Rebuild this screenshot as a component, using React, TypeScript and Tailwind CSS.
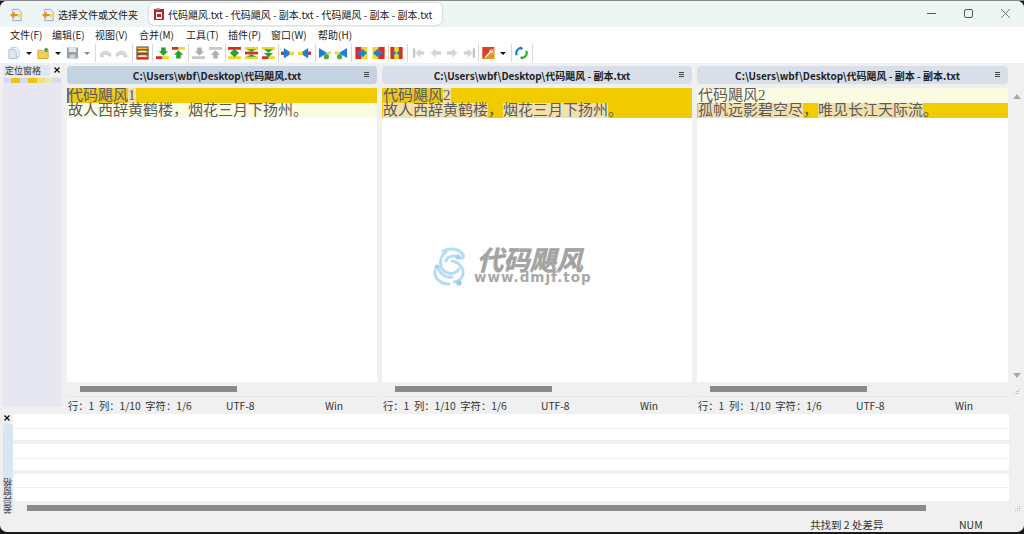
import React from "react";

const CJK = "font-['Noto_Sans_CJK_SC','Noto_Sans',sans-serif]";

function Arrow({ up, fill, x = 8 }: { up?: boolean; fill: string; x?: number }) {
  return up ? (
    <polygon points={`${x},1 ${x + 5},6 ${x + 2.5},6 ${x + 2.5},10 ${x - 2.5},10 ${x - 2.5},6 ${x - 5},6`} fill={fill} />
  ) : (
    <polygon points={`${x},11 ${x + 5},6 ${x + 2.5},6 ${x + 2.5},2 ${x - 2.5},2 ${x - 2.5},6 ${x - 5},6`} fill={fill} />
  );
}

type Kind =
  | "new" | "open" | "save" | "undo" | "redo" | "refresh" | "down" | "up" | "downG" | "upG"
  | "x1" | "x2" | "x3" | "right" | "left" | "rightG" | "leftG" | "fr" | "fl" | "fb"
  | "gl1" | "gl2" | "gr1" | "gr2" | "opt" | "sync";

function Icon({ k }: { k: Kind }) {
  const s = { width: 13, height: 14, viewBox: "0 0 14 14" };
  switch (k) {
    case "new":
      return <svg {...s}><path d="M1 3h6l3 3v7H1z" fill="#dbe6f3" stroke="#a9bdd6" /><path d="M4 1h5l3 3v7H9V6L7 3H4z" fill="#eef3fa" stroke="#b6c8de" /></svg>;
    case "open":
      return <svg {...s}><path d="M1 4h4l1 1h6v8H1z" fill="#f2cf52" stroke="#c9a43a" /><path d="M7 4l3-3 3 3h-2v2H9V4z" fill="#35a035" /></svg>;
    case "save":
      return <svg {...s}><path d="M1 1h12v12H1z" fill="#98a1aa" /><path d="M3 1h8v5H3z" fill="#e4e6e8" /><path d="M4 9h6v4H4z" fill="#d0d4d8" /></svg>;
    case "undo":
      return <svg {...s}><path d="M1 11c0-6 7-8 12-3l-1 3c-3-3-6-3-8-1l1 1z" fill="#d8d8d8" stroke="#c0c0c0" strokeWidth=".6" /></svg>;
    case "redo":
      return <svg {...s}><path d="M13 11c0-6-7-8-12-3l1 3c3-3 6-3 8-1l-1 1z" fill="#d8d8d8" stroke="#c0c0c0" strokeWidth=".6" /></svg>;
    case "refresh":
      return <svg {...s}><rect x="1" y="0.500" width="12" height="13" fill="#f0c020" stroke="#444" /><rect x="1" y="3" width="12" height="1.500" fill="#444" /><rect x="3" y="4.500" width="8" height="2" fill="#e8e8e8" /><rect x="1" y="6.500" width="12" height="2" fill="#e02020" /><rect x="1" y="8.500" width="12" height="1" fill="#444" /><rect x="3" y="9.500" width="8" height="2" fill="#e8e8e8" /><rect x="1" y="11.500" width="12" height="2" fill="#e02020" /></svg>;
    case "down":
      return <svg {...s}><rect x="0" y="10.500" width="7" height="3" fill="#e02828" /><rect x="7" y="10.500" width="7" height="3" fill="#f0d820" /><g transform="translate(0 -1)"><Arrow fill="#2ca02c" /></g></svg>;
    case "up":
      return <svg {...s}><rect x="0" y="0.500" width="7" height="3" fill="#e02828" /><rect x="7" y="0.500" width="7" height="3" fill="#f0d820" /><g transform="translate(-1 3)"><Arrow up fill="#2ca02c" /></g></svg>;
    case "downG":
      return <svg {...s}><rect x="0" y="10.500" width="14" height="3" fill="#c8c8c8" /><g transform="translate(0 -1)"><Arrow fill="#b0b0b0" /></g></svg>;
    case "upG":
      return <svg {...s}><rect x="0" y="0.500" width="14" height="3" fill="#c8c8c8" /><g transform="translate(-1 3)"><Arrow up fill="#b0b0b0" /></g></svg>;
    case "x1":
      return <svg {...s}><rect x="0" y="0.500" width="14" height="3" fill="#e02828" /><rect x="0" y="10.500" width="14" height="3" fill="#f0d820" /><path d="M7 2.500l5 4.500H2z M2 7h10l-5 4.500z" fill="#2ca02c" /></svg>;
    case "x2":
      return <svg {...s}><rect x="0" y="0.500" width="14" height="3" fill="#f0d820" /><rect x="0" y="5.500" width="14" height="3" fill="#e02828" /><rect x="0" y="10.500" width="14" height="3" fill="#f0d820" /><path d="M2 3h10L7 6z M7 8l5 3H2z" fill="#2ca02c" /></svg>;
    case "x3":
      return <svg {...s}><rect x="0" y="0.500" width="14" height="3" fill="#f0d820" /><rect x="0" y="10.500" width="7" height="3" fill="#e02828" /><rect x="7" y="10.500" width="7" height="3" fill="#f0d820" /><path d="M2 3h10L7 7z M2 7h10l-5 4.500z" fill="#2ca02c" /></svg>;
    case "right":
      return <svg {...s}><rect x="0" y="5.500" width="6" height="3.500" fill="#e02828" /><path d="M3 1.500l9 5.700L3 13z" fill="#1f7fd8" /><rect x="9" y="5.500" width="5" height="3.500" fill="#f0d820" /></svg>;
    case "left":
      return <svg {...s}><rect x="8" y="5.500" width="6" height="3.500" fill="#e02828" /><path d="M11 1.500L2 7.200 11 13z" fill="#1f7fd8" /><rect x="0" y="5.500" width="5" height="3.500" fill="#f0d820" /></svg>;
    case "rightG":
      return <svg {...s}><path d="M1 1.500l9 5.500L1 12.500z" fill="#1f7fd8" /><rect x="10" y="5.500" width="4" height="3" fill="#f0d820" /><circle cx="9" cy="11" r="2.800" fill="#46a846" /></svg>;
    case "leftG":
      return <svg {...s}><path d="M13 1.500L4 7l9 5.500z" fill="#1f7fd8" /><rect x="0" y="5.500" width="4" height="3" fill="#f0d820" /><circle cx="5" cy="11" r="2.800" fill="#46a846" /></svg>;
    case "fr":
      return <svg {...s}><rect x="0.500" y="0.500" width="13" height="13" fill="#f0d820" /><rect x="0.500" y="0.500" width="6" height="13" fill="#e02828" /><path d="M3 5h4V2l6 5-6 5V9H3z" fill="#1f7fd8" /></svg>;
    case "fl":
      return <svg {...s}><rect x="0.500" y="0.500" width="13" height="13" fill="#f0d820" /><rect x="7" y="0.500" width="6.500" height="13" fill="#e02828" /><path d="M11 5H7V2L1 7l6 5V9h4z" fill="#1f7fd8" /></svg>;
    case "fb":
      return <svg {...s}><rect x="0.500" y="0.500" width="13" height="13" fill="#f0d820" /><rect x="0.500" y="0.500" width="4" height="13" fill="#e02828" /><rect x="9.500" y="0.500" width="4" height="13" fill="#e02828" /><path d="M7 7L3 3.500v7z M7 7l4-3.500v7z" fill="#1f7fd8" /></svg>;
    case "gl1":
      return <svg {...s}><rect x="1" y="2" width="2.500" height="10" fill="#c4c4c4" /><path d="M4 7l5-5v3h4v4H9v3z" fill="#d4d4d4" /></svg>;
    case "gl2":
      return <svg {...s}><path d="M2 7l5-5v3h6v4H7v3z" fill="#d4d4d4" /></svg>;
    case "gr1":
      return <svg {...s}><path d="M12 7L7 2v3H1v4h6v3z" fill="#d4d4d4" /></svg>;
    case "gr2":
      return <svg {...s}><rect x="10.500" y="2" width="2.500" height="10" fill="#c4c4c4" /><path d="M10 7L5 2v3H1v4h4v3z" fill="#d4d4d4" /></svg>;
    case "opt":
      return <svg {...s}><rect x="0.500" y="0.500" width="13" height="13" fill="#e8961e" /><path d="M0.500 0.500h13L.5 13.500z" fill="#d8402c" /><path d="M3 11l5-5c-.5-2 1-3.500 3-3l-1.500 1.500 1 1L12 4c.5 2-1 3.500-3 3l-5 5z" fill="#f4f4f4" /></svg>;
    case "sync":
      return <svg {...s}><path d="M7 1.500A5.500 5.500 0 0 0 2 9.500" fill="none" stroke="#1f7fd8" strokeWidth="2.400" /><path d="M7 12.500a5.500 5.500 0 0 0 5-8" fill="none" stroke="#3aa83a" strokeWidth="2.400" /><path d="M6 0v4l3-2z" fill="#1f7fd8" /><path d="M8 14v-4l-3 2z" fill="#3aa83a" /></svg>;
  }
}

const Sep = ({ ml, mr }: { ml: string; mr: string }) => <div className={`w-px h-[18px] bg-[#d8d8d8] ${ml} ${mr}`} />;
const Drop = ({ grey }: { grey?: boolean }) => (
  <div className={`ml-[5px] w-0 h-0 border-x-[3px] border-x-transparent border-t-[3px] ${grey ? "border-t-[#8a8a8a]" : "border-t-[#111]"}`} />
);

function Group({ items, gap = "gap-[4px]" }: { items: Kind[]; gap?: string }) {
  return (
    <div className={`flex items-center ${gap}`}>
      {items.map((k, i) => (
        <Icon key={i} k={k} />
      ))}
    </div>
  );
}

function AppIcon() {
  return (
    <svg width="15" height="16" viewBox="0 0 16 16">
      <path d="M4 2h6l3 3v9H4z" fill="#e8f0f8" stroke="#8fa9c8" />
      <path d="M1 8l5-3.500V7h4v2H6v2.500z" fill="#ef8a1e" />
      <rect x="9" y="7" width="5" height="3" fill="#f4d45a" />
    </svg>
  );
}

const CloseX = () => (
  <svg width="6" height="6" viewBox="0 0 6 6"><path d="M0.500 0.500l5 5M5.500 0.500l-5 5" stroke="#111" strokeWidth="1.300" /></svg>
);

const Grip = () => (
  <svg width="7" height="7" viewBox="0 0 7 7" fill="#b4b4b4">
    <rect x="5" y="1" width="1" height="1" /><rect x="3" y="3" width="1" height="1" /><rect x="5" y="3" width="1" height="1" />
    <rect x="1" y="5" width="1" height="1" /><rect x="3" y="5" width="1" height="1" /><rect x="5" y="5" width="1" height="1" />
  </svg>
);

const S = "bg-[#f2e0ae]";
const D = "bg-[#ebc81e]";
const Y = "bg-[#f0cb00]";
const P = "bg-[#fbfbe2]";

type Seg = [string, string?];

function Row({ segs, base }: { segs: Seg[]; base: string }) {
  return (
    <div className={`h-[15px] leading-[15px] text-[15px] pl-[1px] font-['Liberation_Serif','Noto_Sans_CJK_SC',serif] text-[#5a5a5a] whitespace-nowrap flex ${base}`}>
      {segs.map(([t, c], i) => (
        <span key={i} className={c}>
          {t}
        </span>
      ))}
    </div>
  );
}

function Pane({ title, active, width, rows, hasCursor }: { title: string; active?: boolean; width: string; rows: React.ReactNode; hasCursor?: boolean }) {
  return (
    <div className={`flex flex-col shrink-0 ${width}`}>
      <div className={`h-[18px] mt-[3px] rounded-[4px] relative flex items-center justify-center pr-[10px] text-[10px] font-bold text-[#222] ${active ? "bg-[#c4d2e2]" : "bg-[#d8dfe9]"} ${CJK}`}>
        {title}
        <span className="absolute right-[8px] top-[6px] w-[5px] h-[5px] border-y border-[#444] after:block after:h-px after:mt-[1px] after:bg-[#444]" />
      </div>
      <div className="mt-[4px] h-[294px] bg-white overflow-hidden relative">
        {hasCursor && <div className="absolute left-0 top-0 w-[2px] h-[15px] bg-[#5a6fb0]" />}
        {rows}
      </div>
      <div className="h-[15px] flex items-center pl-[13px] border-b border-[#e6e6e6]">
        <div className="w-[157px] h-[6px] bg-[#8a8a8a]" />
      </div>
      <div className={`h-[17px] flex items-center pl-[1px] text-[10.3px] text-[#333] ${CJK} whitespace-nowrap`}>
        <span className="w-[158px]">行：1&nbsp;&nbsp;列：1/10&nbsp;&nbsp;字符：1/6</span>
        <span className="w-[99px]">UTF-8</span>
        <span>Win</span>
      </div>
    </div>
  );
}

function DiffBlock({ h = "h-[26px]", top = "h-[15px]" }: { h?: string; top?: string }) {
  return (
    <div className={`${h} bg-white flex flex-col`}>
      <div className={`${top} border-b border-[#f0f0f0]`} />
    </div>
  );
}

export default function App() {
  return (
    <div className="w-[1024px] h-[534px] bg-[#1a1a1a] overflow-hidden flex flex-col">
      <div className="h-px bg-[#8a8a8a] shrink-0" />
      <div className={`w-[1024px] h-[531px] rounded-b-[7px] rounded-t-[7px] bg-[#f0f0f0] flex flex-col overflow-hidden ${CJK}`}>
        {/* title bar */}
        <div className="h-[26px] bg-[#eef6f5] flex items-end shrink-0 relative">
          <div className="ml-[9px] mb-[4px] flex"><AppIcon /></div>
          <div className="ml-[17px] mb-[4px] flex"><AppIcon /></div>
          <span className="ml-[2px] mb-[5px] text-[10px] text-[#222] leading-[15px] whitespace-nowrap">选择文件或文件夹</span>
          <div className="ml-[11px] mb-[2px] h-[22px] w-[293px] bg-white rounded-[5px] shadow-[0_0_2px_rgba(0,0,0,0.3)] flex items-center pl-[3px]">
            <svg width="14" height="14" viewBox="0 0 14 14">
              <path d="M2 2h10v11H2z" fill="#c0202c" />
              <rect x="4" y="5" width="6" height="7" fill="#fff" />
              <rect x="5" y="7" width="4" height="3" fill="#c0202c" />
              <rect x="4" y="1" width="4" height="2" fill="#a0a0a0" />
            </svg>
            <span className="ml-[2px] text-[10px] text-[#222] whitespace-nowrap">代码飓风.txt - 代码飓风 - 副本.txt - 代码飓风 - 副本 - 副本.txt</span>
          </div>
          <div className="absolute right-[13px] top-[7px] flex items-center gap-[26px]">
            <svg width="11" height="11" viewBox="0 0 11 11"><path d="M1 5.500h9" stroke="#555" strokeWidth="1" /></svg>
            <svg width="11" height="11" viewBox="0 0 11 11"><rect x="1.500" y="1.500" width="8" height="8" rx="1.500" fill="none" stroke="#555" strokeWidth="1" /></svg>
            <svg width="11" height="11" viewBox="0 0 11 11"><path d="M1 1l9 9M10 1l-9 9" stroke="#777" strokeWidth="1" /></svg>
          </div>
        </div>
        {/* menu */}
        <div className="h-[16px] bg-white flex items-center shrink-0 pl-[10px] pb-[1px] text-[10px] text-[#222]">
          <span className="w-[42px]">文件(F)</span>
          <span className="w-[43px]">编辑(E)</span>
          <span className="w-[44px]">视图(V)</span>
          <span className="w-[47px]">合并(M)</span>
          <span className="w-[42px]">工具(T)</span>
          <span className="w-[43px]">插件(P)</span>
          <span className="w-[47px]">窗口(W)</span>
          <span>帮助(H)</span>
        </div>
        {/* toolbar */}
        <div className="h-[20px] bg-white flex items-center shrink-0 pl-[8px]">
          <Icon k="new" />
          <Drop />
          <div className="w-[5px]" />
          <Icon k="open" />
          <Drop />
          <div className="w-[5px]" />
          <Icon k="save" />
          <Drop grey />
          <Sep ml="ml-[5px]" mr="mr-[3px]" />
          <Group items={["undo", "redo"]} gap="gap-[3px]" />
          <Sep ml="ml-[4px]" mr="mr-[3px]" />
          <Icon k="refresh" />
          <Sep ml="ml-[3px]" mr="mr-[3px]" />
          <Group items={["down", "up"]} gap="gap-[3px]" />
          <Sep ml="ml-[3px]" mr="mr-[3px]" />
          <Group items={["downG", "upG"]} />
          <Sep ml="ml-[3px]" mr="mr-[2px]" />
          <Group items={["x1", "x2", "x3"]} />
          <Sep ml="ml-[3px]" mr="mr-[2px]" />
          <Group items={["right", "left"]} />
          <Sep ml="ml-[4px]" mr="mr-[2px]" />
          <Group items={["rightG", "leftG"]} />
          <Sep ml="ml-[3px]" mr="mr-[3px]" />
          <Group items={["fr", "fl"]} />
          <Sep ml="ml-[3px]" mr="mr-[1px]" />
          <Icon k="fb" />
          <Sep ml="ml-[4px]" mr="mr-[4px]" />
          <Group items={["gl1", "gl2", "gr1", "gr2"]} />
          <Sep ml="ml-[2px]" mr="mr-[3px]" />
          <Icon k="opt" />
          <Drop />
          <Sep ml="ml-[5px]" mr="mr-[3px]" />
          <Icon k="sync" />
          <Sep ml="ml-[4px]" mr="mr-0" />
        </div>
        {/* main */}
        <div className="h-[351px] flex shrink-0 relative">
          <div className="w-[59px] ml-[3px] mr-[5px] flex flex-col shrink-0">
            <div className="h-[13px] mt-[1px] flex items-center relative shrink-0">
              <span className="w-[47px] h-[11px] bg-[#dde6f2] text-[9px] leading-[11px] pl-[2px] text-[#333] rounded-[2px] whitespace-nowrap">定位窗格</span>
              <span className="absolute left-[51px] top-[3px] flex"><CloseX /></span>
            </div>
            <div className="bg-[#e7e7f2] h-[330px] pt-[1px]">
              <div className="h-[5px] flex bg-[#d8d8ee] mx-[1px]">
                <div className="w-[7px]" />
                <div className="w-[9px] bg-[#e8c518]" />
                <div className="w-[8px]" />
                <div className="w-[9px] bg-[#e8c518]" />
                <div className="w-[8px] bg-[#efe27a]" />
                <div className="w-[8px] bg-[#ece7b8]" />
              </div>
            </div>
          </div>
          <div className="flex flex-1 min-w-0">
            <Pane
              width="w-[310px]"
              active
              hasCursor
              title="C:\Users\wbf\Desktop\代码飓风.txt"
              rows={
                <>
                  <Row base={Y} segs={[["代码飓风", D], ["1", S]]} />
                  <Row base={P} segs={[["故人西辞黄鹤楼，烟花三月下扬州。"]]} />
                </>
              }
            />
            <div className="w-[5px] shrink-0" />
            <Pane
              width="w-[310px]"
              title="C:\Users\wbf\Desktop\代码飓风 - 副本.txt"
              rows={
                <>
                  <Row base={Y} segs={[["代码飓风", D], ["2", S]]} />
                  <Row base={Y} segs={[["故人西辞黄鹤楼", S], ["，"], ["烟花三月下扬州", S], ["。"]]} />
                </>
              }
            />
            <div className="w-[5px] shrink-0" />
            <Pane
              width="w-[311px]"
              title="C:\Users\wbf\Desktop\代码飓风 - 副本 - 副本.txt"
              rows={
                <>
                  <Row base={P} segs={[["代码飓风2"]]} />
                  <Row base={Y} segs={[["孤帆远影碧空尽", S], ["，"], ["唯见长江天际流", S], ["。"]]} />
                </>
              }
            />
            <div className="w-[16px] shrink-0 flex flex-col items-center pl-[1px]">
              <div className="mt-[31px] w-0 h-0 border-x-[4px] border-x-transparent border-b-[5px] border-b-[#a8a8a8]" />
              <div className="mt-[274px] w-0 h-0 border-x-[4px] border-x-transparent border-t-[5px] border-t-[#a8a8a8]" />
              <div className="mt-[10px] flex"><Grip /></div>
            </div>
          </div>
          {/* watermark */}
          <div className="absolute left-[432px] top-[184px] flex items-center">
            <svg width="41" height="40" viewBox="0 0 41 40">
              <g fill="none" stroke="#b4dcf4" strokeWidth="3" strokeLinecap="round">
                <path d="M11 4c8-4 17-2 20 4 1 2-1 4-3 3-5-3-12-3-14 3" />
                <path d="M14 5c-7 5-7 14-2 19 5 4 12 3 15-2" />
                <path d="M20 14c6 1 12 6 11 13-1 5-5 8-9 8" />
                <path d="M3 24c-1 8 6 13 14 13" />
                <path d="M7 23c2 5 8 8 13 7" />
              </g>
              <circle cx="26" cy="10" r="2.600" fill="#a6d3ef" />
              <circle cx="5" cy="20" r="2.600" fill="#a6d3ef" />
              <circle cx="27" cy="36" r="2.600" fill="#9cc8e6" />
            </svg>
            <div className="ml-[1px] -mt-[3px] flex flex-col items-center">
              <span className="text-[26.5px] leading-[22px] h-[22px] pr-[6px] font-bold italic text-[#a3a3a3] whitespace-nowrap [-webkit-text-stroke:0.6px_#a3a3a3]">代码飓风</span>
              <span className="text-[13.5px] leading-[14px] h-[14px] font-bold text-[#a8a8a8] whitespace-nowrap font-['DejaVu_Sans',sans-serif] tracking-[1px]">www.dmjf.top</span>
            </div>
          </div>
        </div>
        {/* diff */}
        <div className="h-[100px] flex shrink-0">
          <div className="w-[13px] flex flex-col shrink-0 items-center">
            <span className="flex mt-[1px] ml-[1px]"><CloseX /></span>
            <div className="mt-[3px] ml-[2px] w-[10px] h-[91px] bg-[#d8e6f2] rounded-[2px] flex flex-col justify-end items-center text-[9px] text-[#444]">
              <span className="[writing-mode:vertical-rl] rotate-180 leading-[10px]">差异窗格</span>
            </div>
          </div>
          <div className="flex-1 flex flex-col min-w-0">
            <div className="mr-[15px] flex flex-col">
              <DiffBlock />
              <div className="h-[4px]" />
              <DiffBlock />
              <div className="h-[4px]" />
              <DiffBlock h="h-[27px]" top="h-[14px]" />
            </div>
            <div className="h-[13px] flex items-center pl-[14px] relative">
              <div className="w-[899px] h-[6px] bg-[#8a8a8a]" />
              <span className="absolute right-[3px] top-[4px] flex"><Grip /></span>
            </div>
          </div>
        </div>
        {/* status */}
        <div className="flex-1 flex items-start text-[10.5px] leading-[12px] text-[#333] pl-[810px] pt-[5px]">
          <span className="w-[149px] whitespace-nowrap">共找到 2 处差异</span>
          <span>NUM</span>
        </div>
      </div>
    </div>
  );
}
